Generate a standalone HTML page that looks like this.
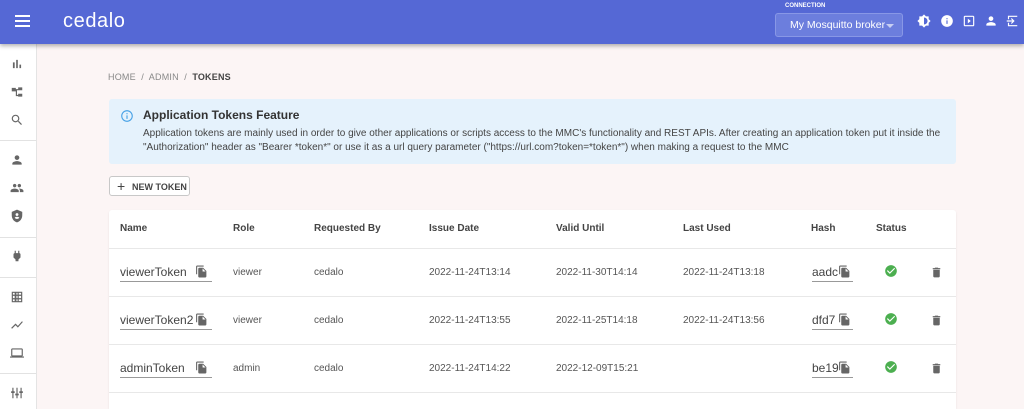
<!DOCTYPE html>
<html><head><meta charset="utf-8"><style>
*{margin:0;padding:0;box-sizing:border-box}
html,body{width:1024px;height:409px;overflow:hidden}
body{background:#fcf5f5;font-family:"Liberation Sans",sans-serif;position:relative;color:#333}
.hdr{position:absolute;left:0;top:0;width:1024px;height:44px;background:#5568d5;box-shadow:0 2px 4px rgba(0,0,0,.3);z-index:2}
.side{position:absolute;left:0;top:44px;width:37px;height:365px;background:#fff;border-right:1px solid #e4e4e4}
.abs{position:absolute}
.hr{position:absolute;left:0;width:36px;height:1px;background:#e2e2e2}
.ic{position:absolute;left:10px;width:14px;height:14px}
.crumb{position:absolute;left:108px;top:72px;font-size:9px;color:#888;letter-spacing:.2px}
.info{position:absolute;left:109px;top:99px;width:847px;height:65px;background:#e5f2fc;border-radius:3px}
.btn{position:absolute;left:109px;top:176px;width:81px;height:20px;border:1px solid #c8c8c8;border-radius:3px;font-size:9px;font-weight:bold;color:#444;background:#fff}
.card{position:absolute;left:109px;top:210px;width:847px;height:199px;background:#fff;border-radius:3px 3px 0 0;box-shadow:0 1px 2px rgba(0,0,0,.08)}
.th{position:absolute;top:223px;font-size:10px;font-weight:bold;color:#444}
.row{position:absolute;left:109px;width:847px;height:1px;background:#e8e8e8}
.td{position:absolute;font-size:10px;color:#555}
.nm{position:absolute;left:120px;width:92px;height:17px;border-bottom:1px solid #999;font-size:12px;color:#444}
.hs{position:absolute;left:812px;width:41px;height:17px;border-bottom:1px solid #999;font-size:12px;color:#444;overflow:hidden}
</style></head><body>
<div class="hdr">
<svg class="abs" style="left:15px;top:15px" width="15" height="12"><rect y="0" width="15" height="2" fill="#fff"/><rect y="5" width="15" height="2" fill="#fff"/><rect y="10" width="15" height="2" fill="#fff"/></svg>
<div class="abs" style="left:63px;top:10px;color:#fff;font-size:20px;letter-spacing:.6px">cedalo</div>
<div class="abs" style="left:785px;top:3px;color:#fff;font-size:6px;font-weight:bold">CONNECTION</div>
<div class="abs" style="left:775px;top:13px;width:128px;height:24px;background:#6c7edd;border:1px solid #8897e6;border-radius:3px;color:#fff;font-size:10.5px;padding:5px 0 0 14px">My Mosquitto broker<span style="position:absolute;left:110px;top:10px;border:4px solid transparent;border-top:4px solid #c8cff3;border-bottom:0"></span></div>
<svg class="abs" style="left:917px;top:14px" width="14" height="14" viewBox="0 0 24 24"><path fill="#fff" d="M20 8.69V4h-4.69L12 .69 8.69 4H4v4.69L.69 12 4 15.31V20h4.69L12 23.31 15.31 20H20v-4.69L23.31 12 20 8.69zM12 18V6c3.31 0 6 2.69 6 6s-2.69 6-6 6z"/></svg>
<svg class="abs" style="left:940px;top:14px" width="14" height="14" viewBox="0 0 24 24"><path fill="#fff" d="M12 2C6.48 2 2 6.48 2 12s4.48 10 10 10 10-4.48 10-10S17.52 2 12 2zm1 15h-2v-6h2v6zm0-8h-2V7h2v2z"/></svg>
<svg class="abs" style="left:962px;top:14px" width="14" height="14" viewBox="0 0 24 24"><path fill="#fff" d="M19 3H5c-1.1 0-2 .9-2 2v14c0 1.1.9 2 2 2h14c1.1 0 2-.9 2-2V5c0-1.1-.9-2-2-2zm0 16H5V5h14v14zM10 8v8l5-4z"/></svg>
<svg class="abs" style="left:984px;top:14px" width="14" height="14" viewBox="0 0 24 24"><path fill="#fff" d="M12 12c2.21 0 4-1.790 4-4s-1.79-4-4-4-4 1.79-4 4 1.79 4 4 4zm0 2c-2.67 0-8 1.34-8 4v2h16v-2c0-2.66-5.33-4-8-4z"/></svg>
<svg class="abs" style="left:1005px;top:14px" width="14" height="14" viewBox="0 0 24 24"><path fill="#fff" d="M10.09 15.59L11.5 17l5-5-5-5-1.41 1.410L12.67 11H3v2h9.67l-2.58 2.59zM19 3H5v6h2V5h14v14H7v-4H5v6h16V3z"/></svg>
</div>
<div class="side">
<div class="hr" style="top:96px"></div><div class="hr" style="top:193px"></div><div class="hr" style="top:233px"></div><div class="hr" style="top:329px"></div>
<svg class="ic" style="top:13px" viewBox="0 0 24 24"><path fill="#666" d="M5 9.2h3V19H5zM10.6 5h2.8v14h-2.8zm5.6 8H19v6h-2.8z"/></svg>
<svg class="ic" style="top:41px" viewBox="0 0 24 24"><path fill="#666" d="M3 5h7v6H3zM14 4h7v5h-7zM14 15h7v5h-7zM10 7h4v2h-2v8h2v2h-4z"/></svg>
<svg class="ic" style="top:69px" viewBox="0 0 24 24"><path fill="#666" d="M15.5 14h-.79l-.28-.27C15.41 12.59 16 11.11 16 9.5 16 5.91 13.09 3 9.5 3S3 5.91 3 9.5 5.91 16 9.5 16c1.61 0 3.09-.59 4.23-1.57l.27.28v.79l5 4.99L20.49 19l-4.99-5zm-6 0C7.01 14 5 11.99 5 9.5S7.01 5 9.5 5 14 7.01 14 9.5 11.99 14 9.5 14z"/></svg>
<svg class="ic" style="top:109px" viewBox="0 0 24 24"><path fill="#666" d="M12 12c2.21 0 4-1.79 4-4s-1.79-4-4-4-4 1.79-4 4 1.79 4 4 4zm0 2c-2.67 0-8 1.34-8 4v2h16v-2c0-2.66-5.33-4-8-4z"/></svg>
<svg class="ic" style="top:137px" viewBox="0 0 24 24"><path fill="#666" d="M16 11c1.66 0 2.99-1.34 2.99-3S17.66 5 16 5s-3 1.34-3 3 1.34 3 3 3zm-8 0c1.66 0 2.99-1.34 2.99-3S9.66 5 8 5 5 6.34 5 8s1.34 3 3 3zm0 2c-2.33 0-7 1.17-7 3.5V19h14v-2.5C15 14.17 10.33 13 8 13zm8 0c-.29 0-.62.02-.97.05 1.16.84 1.97 1.970 1.97 3.45V19h6v-2.5c0-2.33-4.67-3.5-7-3.5z"/></svg>
<svg class="ic" style="top:165px" viewBox="0 0 24 24"><path fill="#666" d="M12 1L3 5v6c0 5.55 3.84 10.74 9 12 5.16-1.26 9-6.45 9-12V5l-9-4zm0 6c1.4 0 2.5 1.1 2.5 2.5S13.4 12 12 12s-2.5-1.1-2.5-2.5S10.6 7 12 7zm0 10c-2 0-3.5-1-4-2 .5-1 2.5-1.8 4-1.8s3.5.8 4 1.8c-.5 1-2 2-4 2z"/></svg>
<svg class="ic" style="top:205px" viewBox="0 0 24 24"><path fill="#666" d="M16 7V3h-2v4h-4V3H8v4c-1 0-2 1-2 2v5.5L9.5 18v3h5v-3l3.5-3.5V9c0-1-1-2-2-2z"/></svg>
<svg class="ic" style="top:246px" viewBox="0 0 24 24"><path fill="#666" d="M3 3v18h18V3H3zm5 16H5v-3h3v3zm0-5H5v-4h3v4zm0-6H5V5h3v3zm5 11h-2v-3h2v3zm0-5h-2v-4h2v4zm0-6h-2V5h2v3zm6 11h-4v-3h4v3zm0-5h-4v-4h4v4zm0-6h-4V5h4v3z"/></svg>
<svg class="ic" style="top:274px" viewBox="0 0 24 24"><path fill="#666" d="M3.5 18.49l6-6.01 4 4L22 6.92l-1.41-1.41-7.09 7.97-4-4L2 16.99z"/></svg>
<svg class="ic" style="top:302px" viewBox="0 0 24 24"><path fill="#666" d="M20 18c1.1 0 1.99-.9 1.99-2L22 6c0-1.1-.9-2-2-2H4c-1.1 0-2 .9-2 2v10c0 1.1.9 2 2 2H0v2h24v-2h-4zM4 6h16v10H4V6z"/></svg>
<svg class="ic" style="top:342px" viewBox="0 0 24 24"><path fill="#666" d="M4 3h2v6h2v3H6v9H4v-9H2V9h2zm7 0h2v10h2v3h-2v5h-2v-5H9v-3h2zm7 0h2v6h2v3h-2v9h-2v-9h-2V9h2z"/></svg>
</div>
<div class="crumb">HOME &nbsp;/&nbsp; ADMIN &nbsp;/&nbsp; <b style="color:#444">TOKENS</b></div>
<div class="info">
<svg class="abs" style="left:11px;top:10px" width="14" height="14" viewBox="0 0 24 24"><path fill="#4aa3e6" d="M11 7h2v2h-2zm0 4h2v6h-2zm1-9C6.48 2 2 6.48 2 12s4.48 10 10 10 10-4.48 10-10S17.52 2 12 2zm0 18c-4.41 0-8-3.59-8-8s3.59-8 8-8 8 3.59 8 8-3.59 8-8 8z"/></svg>
<div class="abs" style="left:34px;top:9px;font-size:12px;font-weight:bold;color:#333">Application Tokens Feature</div>
<div class="abs" style="left:34px;top:28px;width:810px;font-size:10px;line-height:14px;color:#444">Application tokens are mainly used in order to give other applications or scripts access to the MMC's functionality and REST APIs. After creating an application token put it inside the "Authorization" header as "Bearer *token*" or use it as a url query parameter ("https://url.com?token=*token*") when making a request to the MMC</div>
</div>
<div class="btn"><span class="abs" style="left:7px;top:1px;font-size:14px;font-weight:normal">+</span><span class="abs" style="left:22px;top:5px">NEW TOKEN</span></div>
<div class="card"></div>
<div class="th" style="left:120px">Name</div><div class="th" style="left:233px">Role</div><div class="th" style="left:314px">Requested By</div><div class="th" style="left:429px">Issue Date</div><div class="th" style="left:556px">Valid Until</div><div class="th" style="left:683px">Last Used</div><div class="th" style="left:811px">Hash</div><div class="th" style="left:876px">Status</div>
<div class="row" style="top:248px"></div><div class="row" style="top:296px"></div><div class="row" style="top:344px"></div><div class="row" style="top:392px"></div>

<div class="nm" style="top:265px">viewerToken</div><div class="nm" style="top:313px">viewerToken2</div><div class="nm" style="top:361px">adminToken</div>
<div class="hs" style="top:265px">aadc</div><div class="hs" style="top:313px">dfd7</div><div class="hs" style="top:361px">be19</div>

<div class="td" style="left:233px;top:267px">viewer</div><div class="td" style="left:314px;top:267px">cedalo</div><div class="td" style="left:429px;top:267px">2022-11-24T13:14</div><div class="td" style="left:556px;top:267px">2022-11-30T14:14</div><div class="td" style="left:683px;top:267px">2022-11-24T13:18</div>
<div class="td" style="left:233px;top:315px">viewer</div><div class="td" style="left:314px;top:315px">cedalo</div><div class="td" style="left:429px;top:315px">2022-11-24T13:55</div><div class="td" style="left:556px;top:315px">2022-11-25T14:18</div><div class="td" style="left:683px;top:315px">2022-11-24T13:56</div>
<div class="td" style="left:233px;top:363px">admin</div><div class="td" style="left:314px;top:363px">cedalo</div><div class="td" style="left:429px;top:363px">2022-11-24T14:22</div><div class="td" style="left:556px;top:363px">2022-12-09T15:21</div>

<svg width="0" height="0" style="position:absolute"><defs>
<symbol id="cp" viewBox="0 0 24 24"><path fill="#666" d="M16 1H4c-1.1 0-2 .9-2 2v14h2V3h12V1zm-1 4l6 6v10c0 1.1-.9 2-2 2H7.99C6.89 23 6 22.1 6 21l.01-14c0-1.1.89-2 1.99-2h7zm-1 7h5.5L14 6.5V12z"/></symbol>
<symbol id="ok" viewBox="0 0 24 24"><path fill="#4caf50" d="M12 2C6.48 2 2 6.48 2 12s4.48 10 10 10 10-4.48 10-10S17.52 2 12 2zm-2 15l-5-5 1.41-1.41L10 14.17l7.59-7.59L19 8l-9 9z"/></symbol>
<symbol id="del" viewBox="0 0 24 24"><path fill="#666" d="M6 19c0 1.1.9 2 2 2h8c1.1 0 2-.9 2-2V7H6v12zM19 4h-3.5l-1-1h-5l-1 1H5v2h14V4z"/></symbol>
</defs></svg>
<svg class="abs" style="left:195px;top:265px" width="13" height="13"><use href="#cp"/></svg>
<svg class="abs" style="left:195px;top:313px" width="13" height="13"><use href="#cp"/></svg>
<svg class="abs" style="left:195px;top:361px" width="13" height="13"><use href="#cp"/></svg>
<svg class="abs" style="left:838px;top:265px" width="13" height="13"><use href="#cp"/></svg>
<svg class="abs" style="left:838px;top:313px" width="13" height="13"><use href="#cp"/></svg>
<svg class="abs" style="left:838px;top:361px" width="13" height="13"><use href="#cp"/></svg>
<svg class="abs" style="left:884px;top:264px" width="14" height="14"><use href="#ok"/></svg>
<svg class="abs" style="left:884px;top:312px" width="14" height="14"><use href="#ok"/></svg>
<svg class="abs" style="left:884px;top:360px" width="14" height="14"><use href="#ok"/></svg>
<svg class="abs" style="left:930px;top:266px" width="13" height="13"><use href="#del"/></svg>
<svg class="abs" style="left:930px;top:314px" width="13" height="13"><use href="#del"/></svg>
<svg class="abs" style="left:930px;top:362px" width="13" height="13"><use href="#del"/></svg>
</body></html>
